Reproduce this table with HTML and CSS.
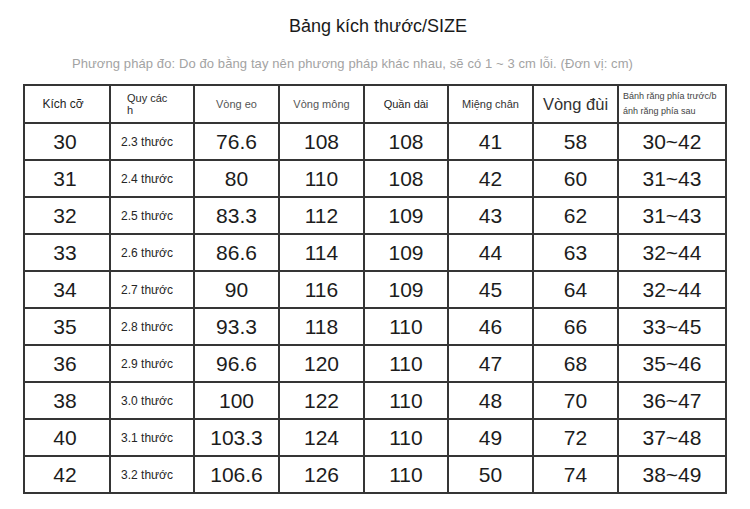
FILE: index.html
```html
<!DOCTYPE html>
<html lang="vi">
<head>
<meta charset="utf-8">
<link rel="stylesheet" href="styles.css">
</head>
<body>
<div class="page">
  <h1 class="title">Bảng kích thước/SIZE</h1>
  <p class="note">Phương pháp đo: Do đo bằng tay nên phương pháp khác nhau, sẽ có 1 ~ 3 cm lỗi. (Đơn vị: cm)</p>
  <table class="size-table">
    <colgroup>
      <col class="c1"><col class="c2"><col class="c3"><col class="c4"><col class="c5"><col class="c6"><col class="c7"><col class="c8">
    </colgroup>
    <thead>
      <tr>
        <th class="h-size">Kích cỡ</th>
        <th class="h-spec"><span class="spec-wrap">Quy cách</span></th>
        <th class="h-small h-gray">Vòng eo</th>
        <th class="h-small h-gray">Vòng mông</th>
        <th class="h-small">Quần dài</th>
        <th class="h-small h-mid">Miệng chân</th>
        <th class="h-big">Vòng đùi</th>
        <th class="h-tiny"><span class="tiny-wrap">Bánh răng phía trước/bánh răng phía sau</span></th>
      </tr>
    </thead>
    <tbody>
      <tr><td class="size">30</td><td class="spec">2.3 thước</td><td>76.6</td><td>108</td><td>108</td><td>41</td><td>58</td><td>30~42</td></tr>
      <tr><td class="size">31</td><td class="spec">2.4 thước</td><td>80</td><td>110</td><td>108</td><td>42</td><td>60</td><td>31~43</td></tr>
      <tr><td class="size">32</td><td class="spec">2.5 thước</td><td>83.3</td><td>112</td><td>109</td><td>43</td><td>62</td><td>31~43</td></tr>
      <tr><td class="size">33</td><td class="spec">2.6 thước</td><td>86.6</td><td>114</td><td>109</td><td>44</td><td>63</td><td>32~44</td></tr>
      <tr><td class="size">34</td><td class="spec">2.7 thước</td><td>90</td><td>116</td><td>109</td><td>45</td><td>64</td><td>32~44</td></tr>
      <tr><td class="size">35</td><td class="spec">2.8 thước</td><td>93.3</td><td>118</td><td>110</td><td>46</td><td>66</td><td>33~45</td></tr>
      <tr><td class="size">36</td><td class="spec">2.9 thước</td><td>96.6</td><td>120</td><td>110</td><td>47</td><td>68</td><td>35~46</td></tr>
      <tr><td class="size">38</td><td class="spec">3.0 thước</td><td>100</td><td>122</td><td>110</td><td>48</td><td>70</td><td>36~47</td></tr>
      <tr><td class="size">40</td><td class="spec">3.1 thước</td><td>103.3</td><td>124</td><td>110</td><td>49</td><td>72</td><td>37~48</td></tr>
      <tr><td class="size">42</td><td class="spec">3.2 thước</td><td>106.6</td><td>126</td><td>110</td><td>50</td><td>74</td><td>38~49</td></tr>
    </tbody>
  </table>
</div>
</body>
</html>
```
FILE: styles.css
```css
html, body {
  margin: 0;
  padding: 0;
  background: #ffffff;
}
body {
  font-family: "Liberation Sans", Arial, sans-serif;
  color: #1a1a1a;
}
.page {
  width: 750px;
  height: 509px;
  display: flex;
  flex-direction: column;
  align-items: flex-start;
}
.title {
  align-self: stretch;
  margin: 15px 0 0 6px;
  font-size: 18px;
  line-height: 22px;
  font-weight: normal;
  text-align: center;
  color: #1a1a1a;
}
.note {
  align-self: stretch;
  margin: 19px 45px 0 0;
  font-size: 13px;
  line-height: 16px;
  letter-spacing: 0.1px;
  text-align: center;
  color: #a3a3a3;
}
.size-table {
  margin: 12px 0 0 23px;
  border-collapse: collapse;
  table-layout: fixed;
  width: 704px;
}
.c1 { width: 86px; }
.c2 { width: 84px; }
.c3 { width: 85px; }
.c4 { width: 85px; }
.c5 { width: 84px; }
.c6 { width: 85px; }
.c7 { width: 85px; }
.c8 { width: 108px; }
.size-table th,
.size-table td {
  border: 2px solid #353535;
  padding: 0;
  text-align: center;
  vertical-align: middle;
  font-weight: normal;
}
.size-table th {
  height: 36px;
}
.size-table td {
  height: 35px;
  font-size: 21px;
  color: #1c1c1c;
}
.size-table td.size {
  padding-right: 4px;
}
.size-table td.spec {
  padding-right: 10px;
  font-size: 12px;
  color: #262626;
}
.size-table th.h-size {
  padding-right: 8px;
  font-size: 12px;
  color: #1e1e1e;
}
.size-table th.h-spec {
  height: 30px;
  vertical-align: top;
  text-align: left;
  padding: 6px 0 0 16px;
  font-size: 11px;
  line-height: 12px;
  color: #2c2c2c;
}
.spec-wrap {
  display: block;
  width: 42px;
  word-break: break-all;
}
.h-small {
  font-size: 11px;
  color: #222;
}
.h-gray {
  color: #555;
}
.h-mid {
  color: #333;
}
.h-big {
  font-size: 16.5px;
  color: #333;
}
.size-table th.h-tiny {
  text-align: left;
  padding: 0 0 0 4px;
  font-size: 9px;
  line-height: 15px;
  color: #444;
}
.tiny-wrap {
  display: block;
  width: 96px;
  word-break: break-all;
}
```
